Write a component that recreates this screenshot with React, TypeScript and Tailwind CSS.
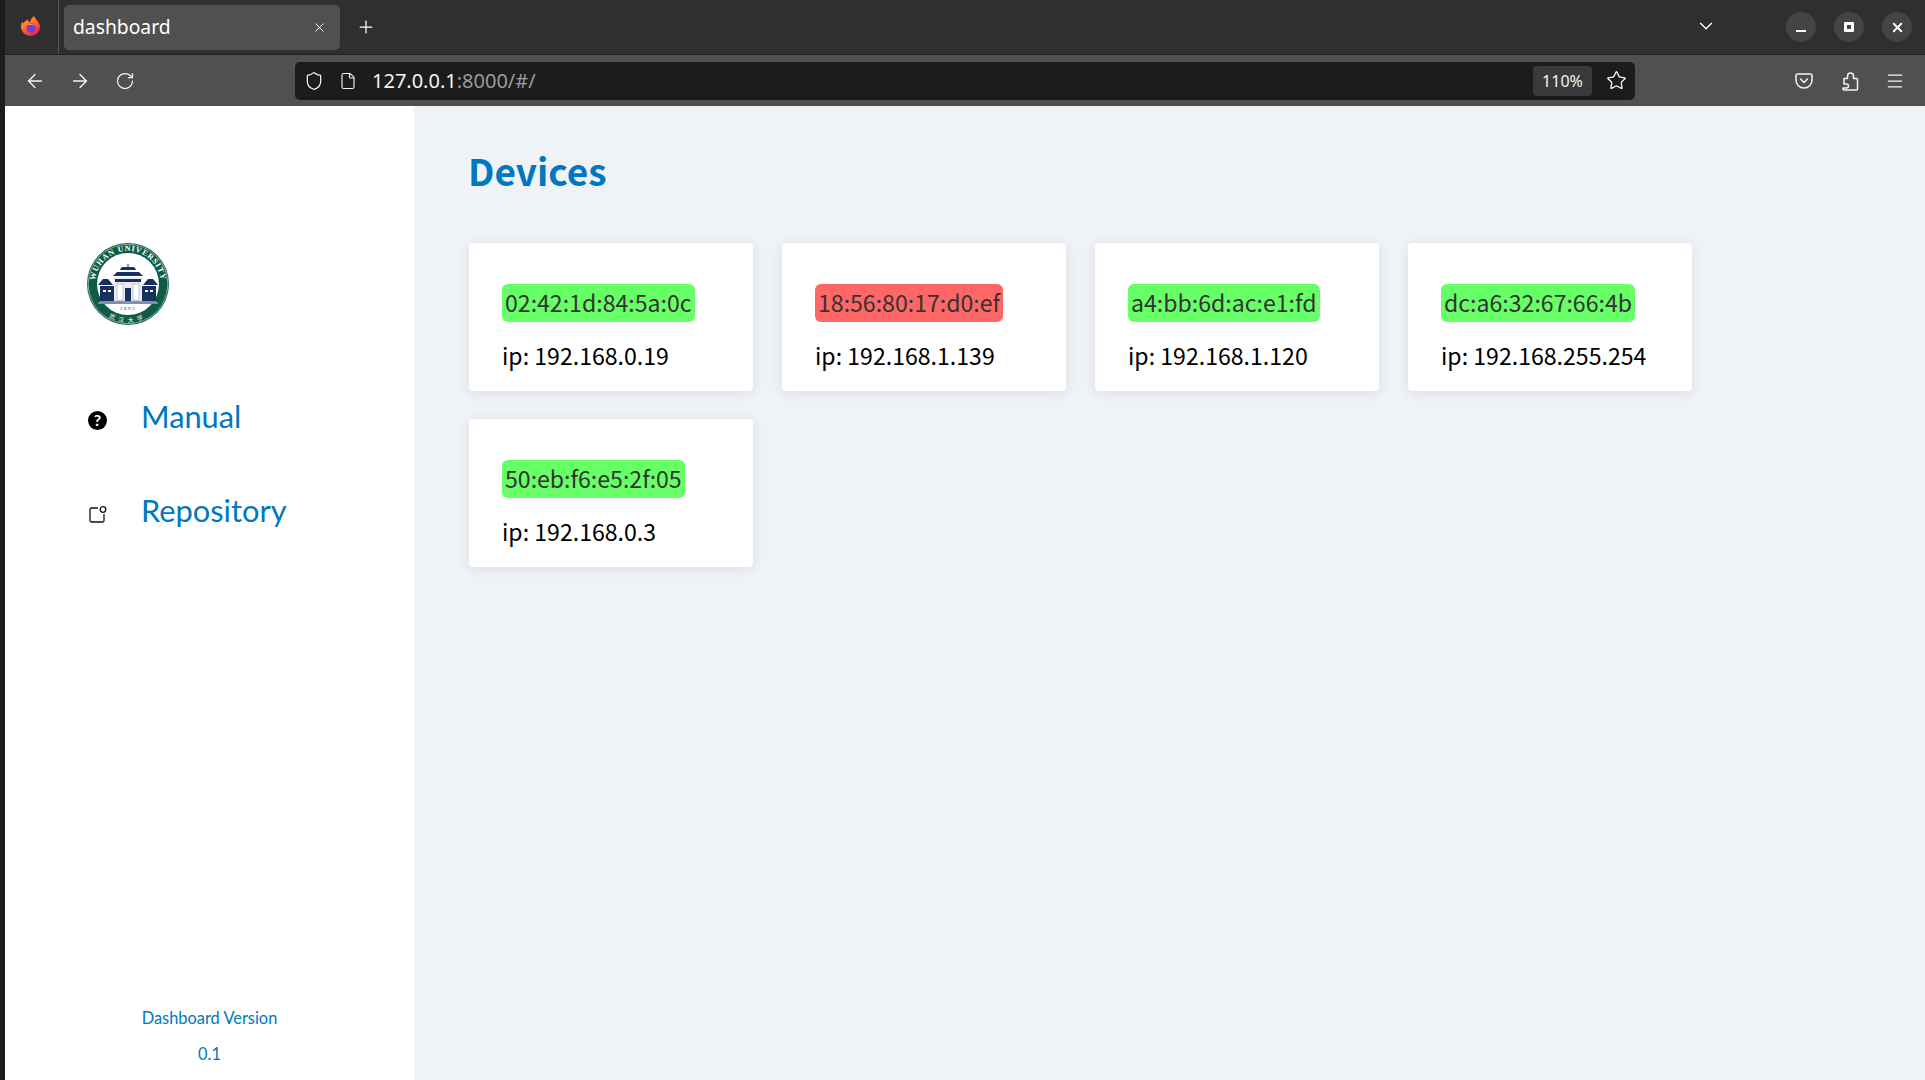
import React from 'react';
import { ArrowLeft, ArrowRight, RotateCw, Shield, File, Star, Menu, Plus, X, ChevronDown } from 'lucide-react';

const devices = [
  { mac: '02:42:1d:84:5a:0c', ip: '192.168.0.19', online: true },
  { mac: '18:56:80:17:d0:ef', ip: '192.168.1.139', online: false },
  { mac: 'a4:bb:6d:ac:e1:fd', ip: '192.168.1.120', online: true },
  { mac: 'dc:a6:32:67:66:4b', ip: '192.168.255.254', online: true },
  { mac: '50:eb:f6:e5:2f:05', ip: '192.168.0.3', online: true },
];

function FirefoxLogo() {
  return (
    <svg width="20" height="22" viewBox="0 0 20 22">
      <defs>
        <linearGradient id="ff" x1="0" y1="0" x2="0.6" y2="1">
          <stop offset="0" stopColor="#ffbd2e" />
          <stop offset="0.55" stopColor="#ff6a2b" />
          <stop offset="1" stopColor="#e8235a" />
        </linearGradient>
      </defs>
      <path d="M13 1c1 3 5 5 6 10 0 6-4 10-9 10S0 17 0 12c0-2 .6-4 1.500-5.500.2 1 .6 1.500 1 2C3.500 6 6 5 7 4.500 6.500 6 7.500 6.500 9 7c.5-2.500 2-4 4-6z" fill="url(#ff)" />
      <circle cx="10" cy="13" r="4.500" fill="#7b3bd0" />
      <path d="M6 10c2-1.500 6-1.500 8 .5-2-.5-5-.5-8-.5z" fill="#ff9a2b" />
    </svg>
  );
}

function PocketIcon() {
  return (
    <svg width="20" height="20" viewBox="0 0 20 20" fill="none" stroke="currentColor" strokeWidth="1.500" strokeLinecap="round" strokeLinejoin="round">
      <path d="M3.500 3h13A1.500 1.500 0 0 1 18 4.500V9a8 8 0 0 1-16 0V4.500A1.500 1.500 0 0 1 3.500 3z" />
      <path d="M6.500 8l3.500 3.500L13.500 8" />
    </svg>
  );
}

function ExtensionIcon() {
  return (
    <svg width="20" height="20" viewBox="0 0 20 20" fill="none" stroke="currentColor" strokeWidth="1.500" strokeLinejoin="round">
      <path d="M4 7.500h3.500V5a3 3 0 0 1 6 0v2.500h3a1 1 0 0 1 1 1V18a1 1 0 0 1-1 1H4a1 1 0 0 1-1-1v-1h3.500a2 2 0 0 0 0-4H4z" />
    </svg>
  );
}

// wuhan university seal
function Seal() {
  return (
    <svg width="84" height="84" viewBox="0 0 84 84">
      <defs>
        <path id="sealTop" d="M9 42a33 33 0 0 1 66 0" />
        <path id="sealBottom" d="M14 68a38 38 0 0 0 56 0" />
      </defs>
      <circle cx="42" cy="42" r="41" fill="#0f5c46" />
      <circle cx="42" cy="42" r="39.800" fill="none" stroke="#fff" strokeWidth="0.500" />
      <circle cx="42" cy="42" r="31" fill="#fff" />
      <text fill="#fff" fontSize="8" fontWeight="700" fontFamily="'Liberation Serif', serif" letterSpacing="0.800">
        <textPath href="#sealTop" startOffset="50%" textAnchor="middle">WUHAN UNIVERSITY</textPath>
      </text>
      <text fill="#fff" fontSize="6" fontFamily="'Noto Sans CJK SC', sans-serif" letterSpacing="4">
        <textPath href="#sealBottom" startOffset="50%" textAnchor="middle">武汉大学</textPath>
      </text>
      {/* main hall roofs */}
      <path d="M41.500 22h1v3h-1zM36 25h12l2.500 3h-17zM31 30h22l4 4H27z" fill="#16305f" />
      {/* side pavilions */}
      <path d="M12 43l5-6h5l5 6zM57 43l5-6h5l5 6z" fill="#16305f" />
      <rect x="14" y="44" width="14" height="15" fill="#16305f" />
      <rect x="56" y="44" width="14" height="15" fill="#16305f" />
      <rect x="28" y="35" width="28" height="24" fill="#e8ecf2" />
      <rect x="29" y="37" width="26" height="3" fill="#16305f" />
      <rect x="31" y="42" width="6" height="16" fill="#fff" stroke="#8a9ab5" strokeWidth="0.500" />
      <rect x="47" y="42" width="6" height="16" fill="#fff" stroke="#8a9ab5" strokeWidth="0.500" />
      <rect x="39" y="46" width="6" height="13" fill="#16305f" />
      <rect x="17" y="48" width="3" height="2" fill="#fff" />
      <rect x="22" y="48" width="3" height="2" fill="#fff" />
      <rect x="59" y="48" width="3" height="2" fill="#fff" />
      <rect x="64" y="48" width="3" height="2" fill="#fff" />
      <path d="M14 59h56l2.500 3h-61z" fill="#7f90ad" />
      <text x="42" y="67.500" textAnchor="middle" fontSize="5" fill="#333" fontFamily="'Liberation Serif', serif" letterSpacing="1.500">1893</text>
    </svg>
  );
}

function DeviceCard({ mac, ip, online }: { mac: string; ip: string; online: boolean }) {
  return (
    <div className="w-[284px] h-[148px] bg-white rounded-[4px] px-[33px] pt-[41px] shadow-[0_2px_12px_rgba(40,60,90,0.1)] font-['Noto_Sans_CJK_SC',sans-serif] text-[23.100px]">
      <div className="flex h-[38px]">
        <span className={`${online ? 'bg-[#66ff66]' : 'bg-[#ff6666]'} text-[#333] rounded-[6px] px-[3px] leading-[37px]`}>{mac}</span>
      </div>
      <div className="mt-[15px] leading-[36px] text-black">ip: {ip}</div>
    </div>
  );
}

function WindowButton({ children }: { children: React.ReactNode }) {
  return <div className="w-[30px] h-[30px] rounded-full bg-[#444444] flex items-center justify-center text-white">{children}</div>;
}

export default function App() {
  return (
    <div className="h-screen w-full flex bg-[#1c1c1c] overflow-hidden">
      <div className="w-[5px] shrink-0 bg-[#1c1c1c]" />
      <div className="flex-1 min-w-0 flex flex-col">
        {/* tab strip */}
        <div className="h-[55px] shrink-0 bg-[#2f2f2f] border-b border-[#222] flex items-center text-white font-['Noto_Sans',sans-serif]">
          <div className="w-[54px] h-full border-r border-[#555] flex items-center justify-center pb-[3px] pr-[2px]">
            <FirefoxLogo />
          </div>
          <div className="ml-[5px] w-[276px] h-[45px] rounded-[5px] bg-[#505050] flex items-center justify-between pl-[9px] pr-[13px] text-[19.300px] text-white">
            <span>dashboard</span>
            <X size={15} strokeWidth={1.500} />
          </div>
          <Plus size={20} strokeWidth={1.500} className="ml-[16px]" />
          <div className="flex-1" />
          <ChevronDown size={22} strokeWidth={1.500} className="mr-[69px] -mt-[2px]" />
          <div className="flex gap-[18px] mr-[13px]">
            <WindowButton><div className="w-[10px] h-[2px] bg-white mt-[8px]" /></WindowButton>
            <WindowButton><div className="w-[10px] h-[10px] border-[3px] border-white rounded-[1px]" /></WindowButton>
            <WindowButton><X size={15} strokeWidth={3} /></WindowButton>
          </div>
        </div>
        {/* nav toolbar */}
        <div className="h-[51px] shrink-0 bg-[#505050] flex items-center text-[#f4f4f4] font-['Noto_Sans',sans-serif]">
          <ArrowLeft size={22} strokeWidth={1.500} className="ml-[19px]" />
          <ArrowRight size={22} strokeWidth={1.500} className="ml-[23px]" />
          <RotateCw size={20} strokeWidth={1.500} className="ml-[24px]" />
          <div className="ml-[160px] w-[1340px] h-[38px] rounded-[5px] bg-[#1c1c1c] flex items-center pl-[9px] pr-[4px]">
            <Shield size={20} strokeWidth={1.500} />
            <File size={18} strokeWidth={1.500} className="ml-[15px]" />
            <span className="ml-[15px] text-[20px]">127.0.0.1<span className="text-[#9a9a9a]">:8000/#/</span></span>
            <div className="flex-1" />
            <div className="w-[59px] h-[30px] rounded-[4px] bg-[#3a3a3a] flex items-center justify-center text-[16px]">110%</div>
            <Star size={21} strokeWidth={1.500} className="ml-[14px] mr-[4px]" />
          </div>
          <div className="flex-1" />
          <PocketIcon />
          <span className="ml-[26px]"><ExtensionIcon /></span>
          <Menu size={20} strokeWidth={1.500} className="ml-[25px] mr-[20px]" />
        </div>
        {/* page */}
        <div className="flex-1 min-h-0 flex">
          <aside className="w-[409px] shrink-0 bg-white flex flex-col font-['Lato',sans-serif] text-[#0077c0]">
            <div className="ml-[81px] mt-[136px]">
              <Seal />
            </div>
            <div className="ml-[83px] mt-[66px] h-[50px] flex items-center">
              <span className="w-[19px] h-[19px] rounded-full bg-black text-white text-[16px] font-bold flex items-center justify-center leading-none mt-[6px]">?</span>
              <span className="ml-[34px] text-[30.800px] leading-none">Manual</span>
            </div>
            <div className="ml-[83px] mt-[44px] h-[50px] flex items-center">
              <svg width="19" height="19" viewBox="0 0 19 19" fill="none" stroke="#111" strokeWidth="1.300" className="mt-[6px]">
                <path d="M10 3H3.500A1.500 1.500 0 0 0 2 4.500v11A1.500 1.500 0 0 0 3.500 17h11a1.500 1.500 0 0 0 1.500-1.500V9" />
                <circle cx="15" cy="4.500" r="2.800" />
              </svg>
              <span className="ml-[34px] text-[30.800px] leading-none">Repository</span>
            </div>
            <div className="mt-auto mb-[8px] text-center text-[16.400px]">
              <div className="leading-[36px]">Dashboard Version</div>
              <div className="leading-[36px]">0.1</div>
            </div>
          </aside>
          <main className="flex-1 min-w-0 bg-[#eff2f6] pl-[55px]">
            <h1 className="mt-[36px] -ml-[1px] text-[37px] leading-[56px] font-bold text-[#0077c0] font-['Noto_Sans_CJK_SC',sans-serif]">Devices</h1>
            <div className="mt-[45px] flex flex-wrap gap-x-[29px] gap-y-[28px] w-[1260px]">
              {devices.map((d) => (
                <DeviceCard key={d.mac} {...d} />
              ))}
            </div>
          </main>
        </div>
      </div>
    </div>
  );
}
